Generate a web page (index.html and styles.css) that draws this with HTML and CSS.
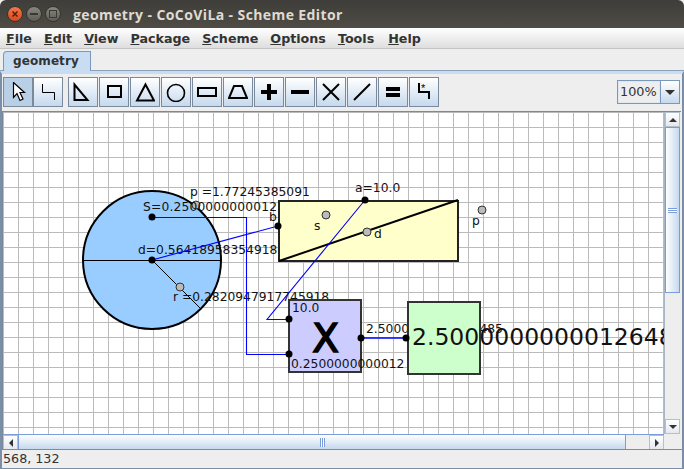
FILE: index.html
```html
<!DOCTYPE html>
<html lang="en">
<head>
    <meta charset="UTF-8">
    <title>geometry - CoCoViLa - Scheme Editor</title>
    <link rel="stylesheet" href="styles.css">
</head>
<body>
    <div class="titlebar">
        <div class="win-buttons">
            <span class="win-btn close">
                <svg width="8" height="8" viewBox="0 0 8 8"><path d="M1.500 1.500L6.500 6.500M6.500 1.500L1.500 6.500" stroke="#5a1d0c" stroke-width="1.500"/></svg>
            </span>
            <span class="win-btn"><span class="win-min"></span></span>
            <span class="win-btn"><span class="win-max"></span></span>
        </div>
        <div class="title">geometry - CoCoViLa - Scheme Editor</div>
    </div>

    <div class="menubar">
        <span class="menu"><u>F</u>ile</span>
        <span class="menu"><u>E</u>dit</span>
        <span class="menu"><u>V</u>iew</span>
        <span class="menu"><u>P</u>ackage</span>
        <span class="menu"><u>S</u>cheme</span>
        <span class="menu"><u>O</u>ptions</span>
        <span class="menu"><u>T</u>ools</span>
        <span class="menu"><u>H</u>elp</span>
    </div>

    <div class="tabstrip">
        <div class="tab">geometry</div>
    </div>

    <div class="panel">
        <div class="toolbar">
            <div class="tool-group tight">
                <button class="tool selected">
                    <svg width="18" height="20" viewBox="0 0 18 20"><path d="M4.500 0.500V15.500L8 11.500L11 18.500L14 17L11 10.500H15.500Z" fill="#fff" stroke="#000" stroke-width="1.200"/></svg>
                </button>
                <button class="tool">
                    <svg width="14" height="18" viewBox="0 0 14 18"><path d="M1.500 1V9.500H13.500V17" fill="none" stroke="#000"/></svg>
                </button>
            </div>
            <div class="tool-group">
                <button class="tool"><svg width="20" height="20" viewBox="0 0 20 20"><path d="M1.500 2.500V18H14.500Z" fill="none" stroke="#000" stroke-width="2"/></svg></button>
                <button class="tool"><svg width="20" height="20" viewBox="0 0 20 20"><rect x="4" y="4" width="13" height="11" fill="none" stroke="#000" stroke-width="2"/></svg></button>
                <button class="tool"><svg width="20" height="20" viewBox="0 0 20 20"><path d="M10.500 2.500L19 18.500H2Z" fill="none" stroke="#000" stroke-width="2"/></svg></button>
                <button class="tool"><svg width="20" height="20" viewBox="0 0 20 20"><circle cx="10" cy="11" r="8.500" fill="none" stroke="#000" stroke-width="1.600"/></svg></button>
                <button class="tool"><svg width="20" height="20" viewBox="0 0 20 20"><rect x="1" y="6" width="18" height="8" fill="none" stroke="#000" stroke-width="2"/></svg></button>
                <button class="tool"><svg width="20" height="20" viewBox="0 0 20 20"><path d="M6 4H14L19 16H1Z" fill="none" stroke="#000" stroke-width="2"/></svg></button>
                <button class="tool"><svg width="20" height="20" viewBox="0 0 20 20"><path d="M10 2V18M2 10H18" stroke="#000" stroke-width="4"/></svg></button>
                <button class="tool"><svg width="20" height="20" viewBox="0 0 20 20"><path d="M1 10H19" stroke="#000" stroke-width="4"/></svg></button>
                <button class="tool"><svg width="20" height="20" viewBox="0 0 20 20"><path d="M2 2L18 18M18 2L2 18" stroke="#000" stroke-width="2"/></svg></button>
                <button class="tool"><svg width="20" height="20" viewBox="0 0 20 20"><path d="M2 18L18 2" stroke="#000" stroke-width="2"/></svg></button>
                <button class="tool"><svg width="20" height="20" viewBox="0 0 20 20"><path d="M3 7H17M3 13H17" stroke="#000" stroke-width="4"/></svg></button>
                <button class="tool">
                    <svg width="20" height="22" viewBox="0 0 20 22"><path d="M5 2V11H15V18" fill="none" stroke="#000" stroke-width="2"/><text x="7" y="11" class="star">*</text></svg>
                </button>
            </div>
            <div class="zoom-combo">
                <span class="zoom-value">100%</span>
                <span class="zoom-arrow"><span class="arrow-down"></span></span>
            </div>
        </div>

        <div class="scroll-area">
            <div class="canvas">
                <svg class="scheme" width="661" height="322" viewBox="3 112 661 322">
                    <!-- circle and the labels that run under the boxes -->
                    <circle cx="152" cy="260" r="69" fill="#99ccff" stroke="#000" stroke-width="2"/>
                    <path d="M83 260.500H221M152 260L201 309" stroke="#000" fill="none"/>
                    <circle cx="196" cy="205" r="4" class="port-grey"/>
                    <text x="143" y="211" textLength="134">S=0.2500000000012</text>
                    <text x="190" y="196">p =1.77245385091</text>
                    <text x="138" y="254">d=0.56418958354918</text>
                    <text x="173" y="301">r =0.2820947917745918</text>
                    <text x="366" y="333">2.5000000000126485</text>

                    <!-- rectangle with diagonal -->
                    <rect x="279" y="201" width="179" height="60" fill="#ffffcc" stroke="#222" stroke-width="2"/>
                    <path d="M279 261L458 200" stroke="#000" stroke-width="2"/>

                    <!-- multiply box -->
                    <rect x="289" y="300" width="72" height="72" fill="#ccccff" stroke="#333" stroke-width="2"/>
                    <text x="325.500" y="352" class="big-x">X</text>
                    <text x="292" y="312">10.0</text>
                    <text x="291" y="368">0.2500000000012</text>

                    <!-- result box -->
                    <rect x="408" y="302" width="72" height="72" fill="#ccffcc" stroke="#333" stroke-width="2"/>
                    <text x="412" y="345" class="result">2.50000000000126485</text>

                    <!-- blue wires -->
                    <path d="M152 217.500H246.500V354.500H289" class="wire"/>
                    <path d="M152 260L278 226" class="wire"/>
                    <path d="M365 200L267 319.500H289" class="wire"/>
                    <path d="M361 338H406" class="wire thick"/>

                    <!-- labels over the rectangle -->
                    <text x="355" y="192">a=10.0</text>
                    <text x="269" y="221">b</text>
                    <text x="314" y="230">s</text>
                    <text x="374" y="238">d</text>
                    <text x="472" y="225">p</text>

                    <!-- ports -->
                    <circle cx="152" cy="217" r="3.500"/>
                    <circle cx="152" cy="260" r="3.500"/>
                    <circle cx="278" cy="226" r="3.500"/>
                    <circle cx="365" cy="200" r="3.500"/>
                    <circle cx="289" cy="319" r="3.500"/>
                    <circle cx="289" cy="354" r="3.500"/>
                    <circle cx="361" cy="338" r="3.500"/>
                    <circle cx="406" cy="338" r="3.500"/>
                    <circle cx="180" cy="287" r="4" class="port-grey"/>
                    <circle cx="326" cy="215" r="4" class="port-grey"/>
                    <circle cx="367" cy="232" r="4" class="port-grey"/>
                    <circle cx="482" cy="210" r="4" class="port-grey"/>
                </svg>
            </div>
            <div class="vscroll">
                <span class="sb-btn"><span class="arrow-up"></span></span>
                <div class="vtrack">
                    <div class="vthumb"><span class="vgrip"></span></div>
                </div>
                <span class="sb-btn"><span class="arrow-down small"></span></span>
            </div>
            <div class="hscroll">
                <span class="sb-btn"><span class="arrow-left"></span></span>
                <div class="htrack">
                    <div class="hthumb"><span class="hgrip"></span></div>
                </div>
                <span class="sb-btn"><span class="arrow-right"></span></span>
            </div>
        </div>

        <div class="statusbar">568, 132</div>
    </div>
</body>
</html>
```

FILE: styles.css
```css
* {
    box-sizing: border-box;
}
html, body {
    margin: 0;
    padding: 0;
    width: 684px;
    height: 469px;
    overflow: hidden;
}
body {
    font-family: "DejaVu Sans", sans-serif;
    background-color: #eeeeee;
    color: #333;
}

/* window title */
.titlebar {
    height: 28px;
    display: flex;
    align-items: center;
    background: linear-gradient(#3e3d39, #4f4c45);
    border-radius: 6px 6px 0 0;
    padding-left: 7px;
}
.win-buttons {
    display: flex;
    gap: 3px;
    width: 66px;
}
.win-btn {
    width: 16px;
    height: 16px;
    border-radius: 50%;
    background: linear-gradient(#8a8780, #5f5c55);
    border: 1px solid #35342f;
    display: flex;
    align-items: center;
    justify-content: center;
}
.win-btn.close {
    background: linear-gradient(#f0794a, #d8491c);
}
.win-min {
    width: 8px;
    height: 2px;
    background: #3a3935;
}
.win-max {
    width: 8px;
    height: 8px;
    border: 1px solid #3a3935;
}
.title {
    font-family: "Open Sans", sans-serif;
    font-weight: 700;
    font-size: 14px;
    color: #dfdbd2;
    letter-spacing: 0.4px;
}

/* menu */
.menubar {
    height: 21px;
    display: flex;
    align-items: center;
    padding-left: 6px;
    gap: 12px;
    font-size: 12.700px;
    font-weight: 700;
    color: #333;
    background: linear-gradient(#ffffff, #dedede);
    border-bottom: 1px solid #c4c4c4;
}
.menu:last-child {
    margin-left: 2px;
}

/* tabs */
.tabstrip {
    height: 22px;
    padding: 2px 0 0 3px;
    background: #eeeeee;
    border-bottom: 1px solid #8aa0bc;
}
.tab {
    width: 88px;
    height: 21px;
    background: #c8ddf2;
    border: 1px solid #7a98bb;
    border-bottom: none;
    border-radius: 4px 0 0 0;
    font-size: 12px;
    letter-spacing: 0.1px;
    font-weight: 700;
    color: #333;
    padding: 2px 0 0 9px;
}
.panel {
    height: 398px;
    border-left: 2px solid #7a8ea8;
    border-right: 2px solid #7a8ea8;
    border-top: 3px solid #c8ddf2;
    border-bottom: 1px solid #7a8ea8;
    display: flex;
    flex-direction: column;
    padding: 0 1px;
}

/* toolbar */
.toolbar {
    height: 37px;
    display: flex;
    align-items: flex-start;
    gap: 5px;
    padding-top: 3px;
}
.tool-group {
    display: flex;
    gap: 1px;
}
.tool-group.tight {
    gap: 0;
}
.tool {
    width: 30px;
    height: 30px;
    padding: 0;
    border: 1px solid #7a8a9c;
    background: linear-gradient(#ffffff, #c5d9ee);
    display: flex;
    align-items: center;
    justify-content: center;
}
.tool.selected {
    background: #b8cfe6;
}
.star {
    font-size: 11px;
    fill: #000;
}
.zoom-combo {
    margin-left: auto;
    margin-top: 3px;
    margin-right: 1px;
    width: 63px;
    height: 24px;
    display: flex;
    border: 1px solid #7a98bb;
    background: #eeeeee;
}
.zoom-value {
    flex: 1;
    font-size: 12.800px;
    line-height: 20px;
    padding-left: 1px;
    color: #333;
    border: 1px solid #dfe7f0;
}
.zoom-arrow {
    width: 19px;
    border-left: 1px solid #7a98bb;
    background: linear-gradient(#ffffff, #c5d9ee);
    display: flex;
    align-items: center;
    justify-content: center;
}
.arrow-down {
    width: 0;
    height: 0;
    border-left: 5px solid transparent;
    border-right: 5px solid transparent;
    border-top: 5px solid #333;
}
.arrow-down.small {
    border-left-width: 4px;
    border-right-width: 4px;
    border-top-width: 4px;
}
.arrow-up {
    width: 0;
    height: 0;
    border-left: 4px solid transparent;
    border-right: 4px solid transparent;
    border-bottom: 4px solid #333;
}
.arrow-left {
    width: 0;
    height: 0;
    border-top: 4px solid transparent;
    border-bottom: 4px solid transparent;
    border-right: 4px solid #333;
}
.arrow-right {
    width: 0;
    height: 0;
    border-top: 4px solid transparent;
    border-bottom: 4px solid transparent;
    border-left: 4px solid #333;
}

/* scheme area */
.scroll-area {
    display: grid;
    grid-template-columns: 661px 16px;
    grid-template-rows: 322px 15px;
    border-top: 1px solid #7a8a9c;
    box-shadow: -1px 0 0 #7a8a9c;
}
.canvas {
    background-color: #ffffff;
    background-image:
        linear-gradient(to right, #bbbbbb 1px, transparent 1px),
        linear-gradient(to bottom, #bbbbbb 1px, transparent 1px);
    background-size: 15px 15px;
    overflow: hidden;
}
.scheme {
    display: block;
    font-size: 12.300px;
    fill: #111;
}
.scheme circle {
    fill: #000;
}
.scheme circle[fill] {
    fill: #99ccff;
}
.scheme .port-grey {
    fill: #bbbbbb;
    stroke: #333;
}
.wire {
    fill: none;
    stroke: #0000ff;
    stroke-width: 1.100;
}
.wire.thick {
    stroke-width: 1.500;
}
.scheme .big-x {
    font-size: 39px;
    text-anchor: middle;
    fill: #000;
    stroke: #000;
    stroke-width: 1.500px;
}
.scheme .result {
    font-size: 23.500px;
}

/* scrollbars */
.vscroll {
    display: flex;
    flex-direction: column;
    background: #eeeeee;
    border-left: 1px solid #a9b6c6;
}
.hscroll {
    display: flex;
    background: #eeeeee;
    border-top: 1px solid #7b9cd8;
}
.sb-btn {
    flex: none;
    width: 15px;
    height: 15px;
    display: flex;
    align-items: center;
    justify-content: center;
    background: linear-gradient(#ffffff, #e4e9ef);
    border: 1px solid #b5c0cc;
}
.vtrack, .htrack {
    flex: 1;
}
.vthumb {
    height: 166px;
    background: linear-gradient(to right, #ffffff, #c5d9ee);
    border: 1px solid #7b9cd8;
    display: flex;
    align-items: center;
    justify-content: center;
}
.vgrip {
    width: 9px;
    height: 5px;
    background: repeating-linear-gradient(#7b9cd8 0 1px, #fff 1px 2px);
}
.hthumb {
    width: 608px;
    height: 100%;
    background: linear-gradient(#ffffff, #c5d9ee);
    border-right: 1px solid #7b9cd8;
    border-left: 1px solid #7b9cd8;
    display: flex;
    align-items: center;
    justify-content: center;
}
.hgrip {
    width: 5px;
    height: 9px;
    background: repeating-linear-gradient(to right, #7b9cd8 0 1px, #fff 1px 2px);
}
.statusbar {
    height: 19px;
    font-size: 12.700px;
    margin: 0 -1px;
    padding: 1px 0 0 1px;
    color: #333;
    border-top: 1px solid #8a8a8a;
}
```
